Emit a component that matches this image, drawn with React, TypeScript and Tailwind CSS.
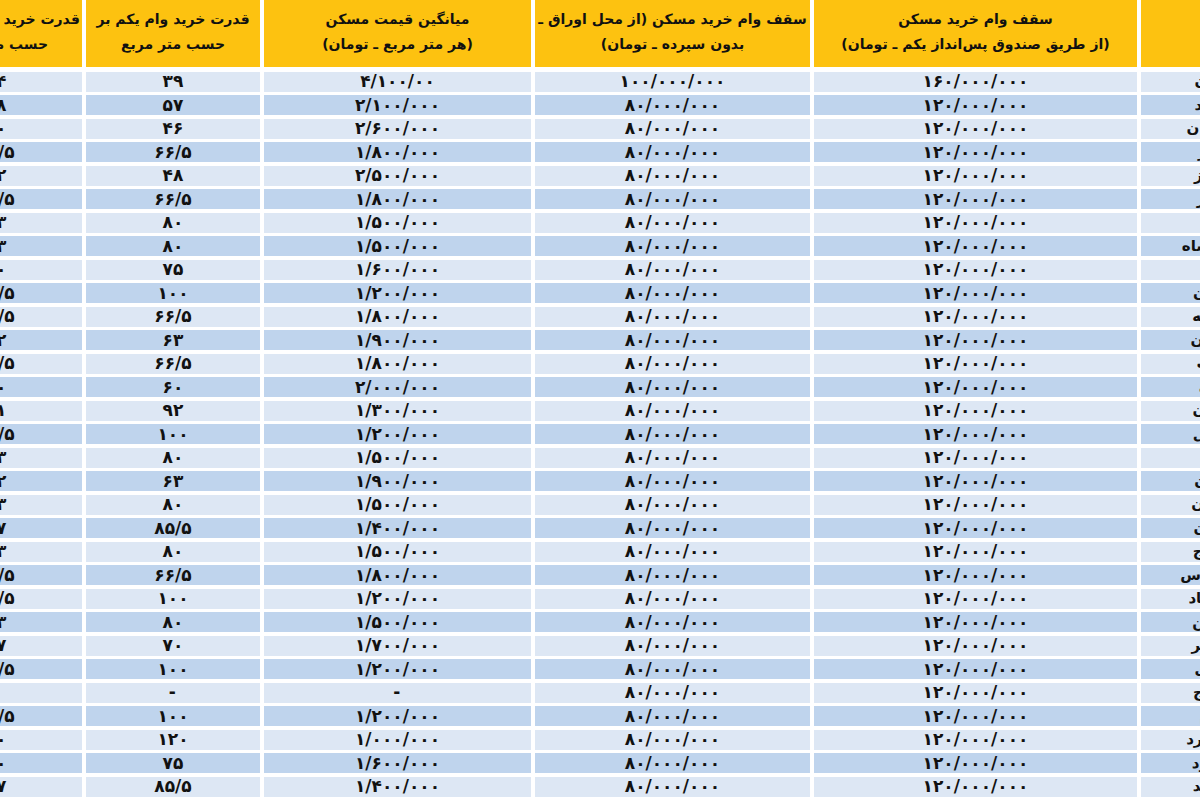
const fa = (s: string) => s.replace(/[0-9]/g, (d) => "۰۱۲۳۴۵۶۷۸۹"[Number(d)]);

const columns = [
  { w: "w-[172px]", lines: ["قدرت خرید وام اوراق بر", "حسب متر مربع"] },
  { w: "w-[174px]", lines: ["قدرت خرید وام یکم بر", "حسب متر مربع"] },
  { w: "w-[267px]", lines: ["میانگین قیمت مسکن", "(هر متر مربع ـ تومان)"] },
  { w: "w-[275px]", lines: ["سقف وام خرید مسکن (از محل اوراق ـ", "بدون سپرده ـ تومان)"] },
  { w: "w-[323px]", lines: ["سقف وام خرید مسکن", "(از طریق صندوق پس‌انداز یکم ـ تومان)"] },
  { w: "w-[150px]", lines: ["شهر"] },
];

// city, price per m2, yekom m2, oragh m2
const rows: [string, string, string, string][] = [
  ["تهران", "4/100/00", "39", "24"],
  ["مشهد", "2/100/000", "57", "38"],
  ["اصفهان", "2/600/000", "46", "30"],
  ["تبریز", "1/800/000", "66/5", "44/5"],
  ["شیراز", "2/500/000", "48", "32"],
  ["اهواز", "1/800/000", "66/5", "44/5"],
  ["قم", "1/500/000", "80", "53"],
  ["کرمانشاه", "1/500/000", "80", "53"],
  ["کرج", "1/600/000", "75", "50"],
  ["کرمان", "1/200/000", "100", "66/5"],
  ["ارومیه", "1/800/000", "66/5", "44/5"],
  ["زاهدان", "1/900/000", "63", "42"],
  ["رشت", "1/800/000", "66/5", "44/5"],
  ["اراک", "2/000/000", "60", "40"],
  ["همدان", "1/300/000", "92", "61"],
  ["اردبیل", "1/200/000", "100", "66/5"],
  ["یزد", "1/500/000", "80", "53"],
  ["زنجان", "1/900/000", "63", "42"],
  ["سمنان", "1/500/000", "80", "53"],
  ["گرگان", "1/400/000", "85/5", "57"],
  ["سنندج", "1/500/000", "80", "53"],
  ["بندرعباس", "1/800/000", "66/5", "44/5"],
  ["خرم‌آباد", "1/200/000", "100", "66/5"],
  ["قزوین", "1/500/000", "80", "53"],
  ["بوشهر", "1/700/000", "70", "47"],
  ["ساری", "1/200/000", "100", "66/5"],
  ["یاسوج", "-", "-", "-"],
  ["ایلام", "1/200/000", "100", "66/5"],
  ["شهرکرد", "1/000/000", "120", "80"],
  ["بجنورد", "1/600/000", "75", "50"],
  ["بیرجند", "1/400/000", "85/5", "57"],
];

export default function App() {
  return (
    <div className="h-[800px] w-[1200px] overflow-hidden bg-white text-[#111]" style={{ fontFamily: '"DejaVu Sans", sans-serif' }}>
      <div className="-ml-[90px] flex w-max flex-col gap-[3.5px]">
        <div className="mb-[1px] flex gap-[4px]">
          {columns.map((c, i) => (
            <div
              key={i}
              dir="rtl"
              className={`${c.w} ${i === 5 ? "pl-[24px]" : ""} flex h-[67px] flex-col items-center justify-center bg-[#fdc210] pb-1 text-center text-[14px] font-bold leading-[25px]`}
            >
              {c.lines.map((l, j) => (
                <div key={j} className="whitespace-nowrap">
                  {l}
                </div>
              ))}
            </div>
          ))}
        </div>
        {rows.map((r, i) => {
          const bg = i % 2 === 0 ? "bg-[#dde7f4]" : "bg-[#bfd4ed]";
          const cells = [
            r[3],
            r[2],
            r[1],
            i === 0 ? "100/000/000" : "80/000/000",
            i === 0 ? "160/000/000" : "120/000/000",
          ];
          return (
            <div key={i} className="flex gap-[4px]">
              {cells.map((v, j) => (
                <div
                  key={j}
                  className={`${columns[j].w} ${bg} flex h-[20px] items-center justify-center text-[17px] font-bold leading-none tracking-[1.5px]`}
                >
                  {fa(v)}
                </div>
              ))}
              <div dir="rtl" className={`${columns[5].w} ${bg} flex h-[20px] items-center justify-center text-[15px] font-bold leading-none`}>
                {r[0]}
              </div>
            </div>
          );
        })}
      </div>
    </div>
  );
}
